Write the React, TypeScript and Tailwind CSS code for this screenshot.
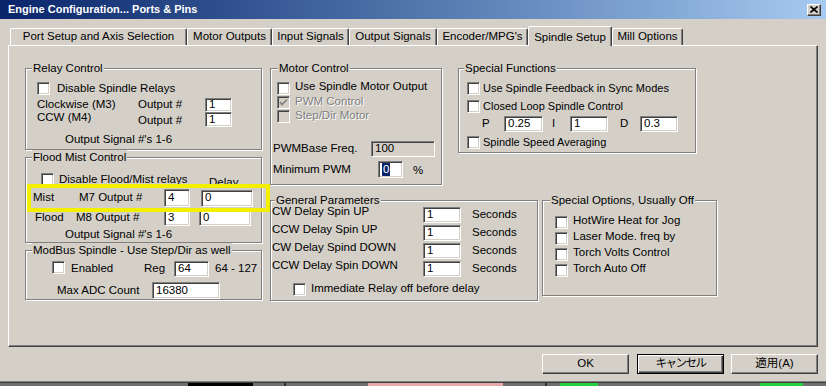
import React from "react";

const face = "font-['Liberation_Sans','Noto_Sans_CJK_JP',sans-serif]";
const sunken =
  "border border-t-[#808080] border-l-[#808080] border-r-white border-b-white shadow-[inset_1px_1px_0_#404040,inset_-1px_-1px_0_#d4d0c8]";
const raised =
  "border border-t-white border-l-white border-r-[#404040] border-b-[#404040] shadow-[inset_-1px_-1px_0_#808080]";
const dim = "text-[#808080] [text-shadow:1px_1px_0_#fff]";

function Check({ checked = false, disabled = false }: { checked?: boolean; disabled?: boolean }) {
  return (
    <span
      className={`inline-block h-[13px] w-[13px] shrink-0 ${sunken} ${
        disabled ? "bg-[#d4d0c8]" : "bg-white"
      }`}
    >
      {checked && (
        <svg width="11" height="11" viewBox="0 0 11 11" className="block">
          <polyline
            points="2,5 4,7.5 9,2.5"
            fill="none"
            stroke={disabled ? "#808080" : "#000"}
            strokeWidth="1.7"
          />
        </svg>
      )}
    </span>
  );
}

function Field({
  className,
  children,
  readOnly = false,
}: {
  className: string;
  children?: React.ReactNode;
  readOnly?: boolean;
}) {
  return (
    <div
      className={`flex shrink-0 items-center pl-[3px] leading-none ${sunken} ${
        readOnly ? "bg-[#d4d0c8]" : "bg-white"
      } ${className}`}
    >
      {children}
    </div>
  );
}

function Group({
  title,
  tl,
  className,
  children,
}: {
  title: string;
  tl: string;
  className: string;
  children: React.ReactNode;
}) {
  return (
    <div
      className={`relative shrink-0 border border-[#808080] shadow-[inset_1px_1px_0_#fff,1px_1px_0_#fff] ${className}`}
    >
      <span className={`absolute top-[-8px] ${tl} bg-[#d4d0c8] px-[1px] leading-[14px] whitespace-nowrap`}>
        {title}
      </span>
      {children}
    </div>
  );
}

const tabs = [
  { label: "Port Setup and Axis Selection", w: "w-[177px]" },
  { label: "Motor Outputs", w: "w-[85px]" },
  { label: "Input Signals", w: "w-[77px]" },
  { label: "Output Signals", w: "w-[88px]" },
  { label: "Encoder/MPG's", w: "w-[91px]" },
  { label: "Spindle Setup", w: "w-[84px]", active: true },
  { label: "Mill Options", w: "w-[71px]" },
];

export default function App() {
  return (
    <div className={`relative h-[386px] w-[826px] overflow-hidden bg-[#d4d0c8] text-[11.5px] text-black ${face}`}>
      {/* title bar */}
      <div className="flex h-[19px] items-center bg-linear-to-r from-[#0a246a] to-[#a6caf0] pl-[8px] pr-[5px]">
        <span className="text-[11px] font-bold text-white">Engine Configuration... Ports &amp; Pins</span>
        <div className={`ml-auto grid h-[12px] w-[14px] place-items-center bg-[#d4d0c8] ${raised}`}>
          <svg width="8" height="7" viewBox="0 0 8 7">
            <path d="M0.5 0.5 L7.5 6.5 M7.5 0.5 L0.5 6.5" stroke="#000" strokeWidth="1.6" />
          </svg>
        </div>
      </div>

      {/* tabs */}
      <div className="mt-[7px] flex h-[19px] items-end pl-[10px]">
        {tabs.map((t) =>
          t.active ? (
            <div
              key={t.label}
              className={`relative z-10 -mb-px flex h-[20px] ${t.w} items-start justify-center rounded-t-[2px] border-l border-t border-r border-l-white border-t-white border-r-[#404040] bg-[#d4d0c8] pt-[2px] shadow-[inset_-1px_0_0_#808080]`}
            >
              {t.label}
            </div>
          ) : (
            <div
              key={t.label}
              className={`flex h-[17px] ${t.w} items-center justify-center rounded-t-[2px] border-l border-t border-r border-l-white border-t-white border-r-[#404040] shadow-[inset_-1px_0_0_#808080]`}
            >
              {t.label}
            </div>
          )
        )}
      </div>

      {/* panel */}
      <div className={`ml-[8px] h-[302px] w-[810px] pl-[16px] pt-[22px] ${raised}`}>
        <div className="flex">
          {/* left column */}
          <div className="flex w-[237px] flex-col gap-[7px]">
            <Group title="Relay Control" tl="left-[6px]" className="h-[82px] w-[237px]">
              <div className="flex h-[13px] items-center pl-[11px] pt-[13px] box-content">
                <Check />
                <span className="ml-[7px]">Disable Spindle Relays</span>
              </div>
              <div className="mt-[3px] flex h-[14px] items-center pl-[11px]">
                <span className="w-[101px]">Clockwise (M3)</span>
                <span className="w-[67px]">Output #</span>
                <Field className="h-[14px] w-[27px]">1</Field>
              </div>
              <div className="flex h-[15px] items-center pl-[11px]">
                <span className="mb-[4px] w-[101px]">CCW (M4)</span>
                <span className="mt-[3px] w-[67px]">Output #</span>
                <Field className="h-[15px] w-[27px]">1</Field>
              </div>
              <div className="mt-[5px] pl-[39px] leading-[14px]">Output Signal #'s 1-6</div>
            </Group>

            <Group title="Flood Mist Control" tl="left-[6px]" className="h-[86px] w-[237px]">
              <div className="mt-[15px] flex h-[13px] items-center pl-[15px]">
                <Check />
                <span className="ml-[5px] w-[150px]">Disable Flood/Mist relays</span>
                <span className="mt-[6px]">Delay</span>
              </div>
              <div className="mt-[3px] flex h-[18px] items-center pl-[7px]">
                <span className="w-[46px]">Mist</span>
                <span className="w-[85px]">M7 Output #</span>
                <Field className="h-[18px] w-[26px]">4</Field>
                <Field className="ml-[11px] h-[17px] w-[52px]">0</Field>
              </div>
              <div className="mt-[3px] flex h-[16px] items-center pl-[9px]">
                <span className="w-[41px]">Flood</span>
                <span className="w-[88px]">M8 Output #</span>
                <Field className="h-[16px] w-[26px]">3</Field>
                <Field className="ml-[9px] h-[16px] w-[52px]">0</Field>
              </div>
              <div className="mt-[1px] pl-[39px] leading-[14px]">Output Signal #'s 1-6</div>
            </Group>

            <Group title="ModBus Spindle - Use Step/Dir as well" tl="left-[6px]" className="h-[50px] w-[237px]">
              <div className="mt-[10px] flex h-[16px] items-center pl-[26px]">
                <span className="mt-[3px]">
                  <Check />
                </span>
                <span className="ml-[6px] w-[73px]">Enabled</span>
                <span className="w-[30px]">Reg</span>
                <Field className="h-[16px] w-[35px]">64</Field>
                <span className="ml-[6px]">64 - 127</span>
              </div>
              <div className="mt-[5px] flex h-[17px] items-center pl-[31px]">
                <span className="w-[95px]">Max ADC Count</span>
                <Field className="h-[17px] w-[68px]">16380</Field>
              </div>
            </Group>
          </div>

          {/* right area */}
          <div className="ml-[8px] flex flex-col">
            <div className="flex items-start">
              <Group title="Motor Control" tl="left-[7px]" className="h-[117px] w-[172px]">
                <div className="mt-[12px] flex flex-col pl-[6px]">
                  <div className="flex h-[14px] items-center">
                    <Check />
                    <span className="ml-[5px] mb-[2px]">Use Spindle Motor Output</span>
                  </div>
                  <div className="flex h-[14px] items-center">
                    <Check checked disabled />
                    <span className={`ml-[5px] ${dim}`}>PWM Control</span>
                  </div>
                  <div className="flex h-[14px] items-center">
                    <Check disabled />
                    <span className={`ml-[5px] ${dim}`}>Step/Dir Motor</span>
                  </div>
                </div>
                <div className="mt-[18px] flex h-[16px] items-center pl-[2px]">
                  <span className="w-[98px]">PWMBase Freq.</span>
                  <Field readOnly className="h-[16px] w-[64px]">100</Field>
                </div>
                <div className="mt-[4px] flex h-[17px] items-center pl-[2px]">
                  <span className="w-[105px]">Minimum PWM</span>
                  <Field className="h-[17px] w-[25px]">
                    <span className="bg-[#0a246a] px-[1px] leading-[13px] text-white">0</span>
                  </Field>
                  <span className="ml-[10px] mt-[3px]">%</span>
                </div>
              </Group>

              <Group title="Special Functions" tl="left-[5px]" className="ml-[16px] h-[85px] w-[238px]">
                <div className="mt-[12px] flex h-[14px] items-center pl-[8px]">
                  <Check />
                  <span className="ml-[3px] text-[11px]">Use Spindle Feedback in Sync Modes</span>
                </div>
                <div className="mt-[4px] flex h-[14px] items-center pl-[8px]">
                  <Check />
                  <span className="ml-[3px] text-[11px]">Closed Loop Spindle Control</span>
                </div>
                <div className="mt-[3px] flex h-[16px] items-center pl-[23px]">
                  <span className="w-[22px]">P</span>
                  <Field className="h-[16px] w-[39px]">0.25</Field>
                  <span className="ml-[9px] w-[18px]">I</span>
                  <Field className="h-[16px] w-[38px]">1</Field>
                  <span className="ml-[12px] w-[20px]">D</span>
                  <Field className="h-[16px] w-[38px]">0.3</Field>
                </div>
                <div className="mt-[3px] flex h-[14px] items-center pl-[8px]">
                  <Check />
                  <span className="ml-[3px] text-[11px]">Spindle Speed Averaging</span>
                </div>
              </Group>
            </div>

            <div className="mt-[15px] flex items-start">
              <Group title="General Parameters" tl="left-[4px]" className="h-[101px] w-[268px]">
                <div className="mt-[6px] flex flex-col gap-[2px] pl-[1px]">
                  {["CW Delay Spin UP", "CCW Delay Spin UP", "CW Delay Spind DOWN", "CCW Delay Spin DOWN"].map(
                    (l) => (
                      <div key={l} className="flex h-[16px] items-center">
                        <span className="mb-[6px] w-[151px]">{l}</span>
                        <Field className="h-[16px] w-[38px]">1</Field>
                        <span className="ml-[11px]">Seconds</span>
                      </div>
                    )
                  )}
                </div>
                <div className="mt-[6px] flex h-[13px] items-center pl-[22px]">
                  <Check />
                  <span className="ml-[5px] mb-[2px]">Immediate Relay off before delay</span>
                </div>
              </Group>

              <Group title="Special Options, Usually Off" tl="left-[7px]" className="ml-[4px] h-[96px] w-[175px]">
                <div className="mt-[13px] flex flex-col pl-[12px]">
                  {["HotWire Heat for Jog", "Laser Mode. freq by", "Torch Volts Control", "Torch Auto Off"].map((l) => (
                    <div key={l} className="flex h-[16px] items-center">
                      <Check />
                      <span className="mb-[3px] ml-[5px]">{l}</span>
                    </div>
                  ))}
                </div>
              </Group>
            </div>
          </div>
        </div>
      </div>

      {/* buttons */}
      <div className="mt-[7px] flex h-[20px] justify-end pr-[8px]">
        <div className={`flex h-[20px] w-[87px] items-center justify-center ${raised}`}>OK</div>
        <div className="ml-[8px] flex h-[20px] w-[87px] items-center justify-center border border-black shadow-[inset_1px_1px_0_#fff,inset_-1px_-1px_0_#404040,inset_-2px_-2px_0_#808080]">
          <span className="tracking-[-1.5px]">キャンセル</span>
        </div>
        <div className={`ml-[7px] flex h-[20px] w-[87px] items-center justify-center ${raised}`}>適用(A)</div>
      </div>

      {/* window bottom edge and what lies behind it */}
      <div className="mt-[7px] h-[2px] border-t border-b border-t-[#808080] border-b-[#404040]" />
      <div className="flex h-[3px] bg-[#6e6e6e]">
        <div className="ml-[188px] w-[65px] bg-black" />
        <div className="ml-[31px] w-[2px] bg-[#303030]" />
        <div className="ml-[82px] w-[135px] bg-[#e8a8a8]" />
        <div className="ml-[42px] w-[2px] bg-[#303030]" />
        <div className="ml-[13px] w-[38px] bg-[#22d040]" />
        <div className="ml-[162px] w-[43px] bg-[#22d040]" />
      </div>

      {/* yellow highlight drawn over the Mist row */}
      <div className="pointer-events-none absolute left-[27px] top-[184px] h-[28px] w-[243px] border-[4px] border-[#f2f000]" />
    </div>
  );
}
